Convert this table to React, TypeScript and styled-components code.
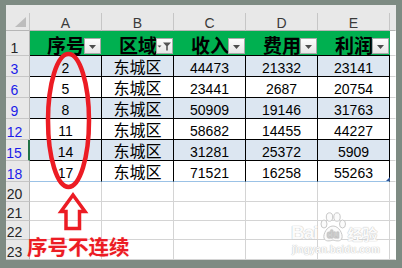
import React from "react";
import styled, { createGlobalStyle } from "styled-components";

const GlobalStyle = createGlobalStyle`
  html, body { margin: 0; padding: 0; background: #7e8b83; }
  body { width: 402px; height: 268px; overflow: hidden; }
`;

const COLS = "24px 72px 72px 72px 72px 72px 6px";
const HEAD_BG = "#e8e8e8";
const HEAD_LINE = "#c6c6c6";
const GRID = "#d4d4d4";
const CJK_STACK = `"Liberation Sans", "Noto Sans CJK SC", sans-serif`;

const Frame = styled.div`
  width: 402px;
  height: 268px;
  box-sizing: border-box;
  padding: 5px 6px 8px 6px;
  background: #7e8b83;
`;

const Sheet = styled.div`
  position: relative;
  width: 390px;
  height: 255px;
  background: #fff;
  overflow: hidden;
  display: flex;
  flex-direction: column;
  font-family: "Liberation Sans", Arial, sans-serif;
`;

const TopStrip = styled.div`
  flex: none;
  height: 8px;
  background: ${HEAD_BG};
`;

const Row = styled.div<{ $h: number }>`
  flex: none;
  display: grid;
  grid-template-columns: ${COLS};
  height: ${(p) => p.$h}px;
`;

const Corner = styled.div`
  box-sizing: border-box;
  background: ${HEAD_BG};
  border-right: 1px solid ${HEAD_LINE};
  border-bottom: 1px solid #b6b6b6;
  display: flex;
  align-items: flex-end;
  justify-content: flex-end;
  padding: 0 3px 3px 0;
`;

const ColHead = styled.div<{ $last?: boolean }>`
  box-sizing: border-box;
  background: ${HEAD_BG};
  border-right: 1px solid ${(p) => (p.$last ? HEAD_BG : HEAD_LINE)};
  border-bottom: 1px solid #b6b6b6;
  display: flex;
  align-items: flex-end;
  justify-content: center;
  font-size: 14px;
  line-height: 14px;
  color: #3a3a3a;
`;

const RowHead = styled.div<{ $filtered?: boolean; $active?: boolean }>`
  box-sizing: border-box;
  background: ${HEAD_BG};
  border-bottom: 1px solid ${HEAD_LINE};
  border-right: ${(p) => (p.$active ? "2px solid #217346" : "1px solid #b6b6b6")};
  display: flex;
  align-items: flex-end;
  justify-content: center;
  padding: 0 6px 0 0;
  font-size: 14px;
  line-height: 14px;
  color: ${(p) => (p.$filtered ? "#1c1ce8" : "#262626")};
`;

const HeadCell = styled.div`
  position: relative;
  box-sizing: border-box;
  background: #00b050;
  border-bottom: 1px solid #000;
  display: flex;
  align-items: flex-end;
  justify-content: center;
  font-family: ${CJK_STACK};
  font-weight: 700;
  font-size: 19px;
  line-height: 17px;
  color: #000;
`;

const FilterBtn = styled.span`
  position: absolute;
  right: 1px;
  bottom: 1px;
  width: 17px;
  height: 16px;
  box-sizing: border-box;
  border: 1px solid #a9a9a9;
  background: linear-gradient(#fdfdfd, #e6e6e6);
  display: flex;
  align-items: center;
  justify-content: center;
  padding-top: 1px;
`;

const DataCell = styled.div<{ $band?: boolean; $end?: boolean; $cjk?: boolean }>`
  box-sizing: border-box;
  background: ${(p) => (p.$band ? "#dce6f1" : "#fff")};
  border-right: 1px solid #000;
  border-bottom: 1px solid ${(p) => (p.$end ? "#9bc2e6" : "#000")};
  display: flex;
  align-items: flex-end;
  justify-content: center;
  padding-bottom: 1px;
  font-family: ${CJK_STACK};
  font-size: ${(p) => (p.$cjk ? 16 : 14)}px;
  line-height: 14px;
  color: #000;
`;

const EmptyCell = styled.div<{ $last?: boolean }>`
  box-sizing: border-box;
  background: #fff;
  border-right: 1px solid ${(p) => (p.$last ? "#fff" : GRID)};
  border-bottom: 1px solid ${GRID};
`;

const Overlay = styled.svg`
  position: absolute;
  left: 0;
  top: 0;
  width: 390px;
  height: 255px;
  pointer-events: none;
`;

const ResizeHandle = styled.span`
  position: absolute;
  left: 380px;
  top: 172px;
  width: 0;
  height: 0;
  border-left: 4px solid transparent;
  border-bottom: 4px solid #2f5597;
`;

const Callout = styled.div`
  position: absolute;
  left: 21px;
  top: 231px;
  font-family: "Noto Sans CJK SC", sans-serif;
  font-weight: 700;
  font-size: 20.5px;
  line-height: 20.5px;
  color: #ec1c24;
  white-space: nowrap;
  text-shadow: 0 0 1px rgba(255, 170, 180, 0.8);
`;

const Watermark = styled.div`
  position: absolute;
  left: 279px;
  top: 207px;
  display: flex;
  flex-direction: column;
  align-items: flex-start;
  pointer-events: none;
  color: #fbfbfb;
  text-shadow: 0 0 1px #c4c4c4, 0 0 1px #c4c4c4;
`;

const WmTop = styled.div`
  display: flex;
  align-items: flex-end;
  gap: 1px;
`;

const WmBai = styled.span`
  font-family: "Liberation Sans", Arial, sans-serif;
  font-weight: 700;
  font-size: 19px;
  line-height: 19px;
  letter-spacing: -1px;
  margin-left: 6px;
  margin-bottom: 1px;
`;

const WmJy = styled.span`
  font-family: ${CJK_STACK};
  font-weight: 700;
  font-size: 15px;
  line-height: 16px;
`;

const WmUrl = styled.span`
  font-family: "Liberation Sans", Arial, sans-serif;
  font-weight: 700;
  font-size: 10px;
  line-height: 11px;
  margin-left: 7px;
  margin-top: 1px;
`;

const Triangle = () => (
  <svg width="7" height="4" viewBox="0 0 7 4">
    <polygon points="0,0 7,0 3.5,4" fill="#4d4d4d" />
  </svg>
);

const FunnelIcon = () => (
  <svg width="15" height="9" viewBox="0 0 15 9">
    <polygon points="0.5,3.5 4.5,3.5 2.5,5.5" fill="#555" />
    <polygon points="6,0.5 14,0.5 10.8,4 10.8,8.5 9.2,8.5 9.2,4" fill="#555" />
  </svg>
);

const SelectAll = () => (
  <svg width="11" height="10" viewBox="0 0 11 10">
    <polygon points="0,10 11,10 11,0" fill="#bdbdbd" />
  </svg>
);

const Paw = () => (
  <svg width="28" height="31" viewBox="0 0 28 31">
    <g fill="#fbfbfb" stroke="#c8c8c8" strokeWidth="1">
      <ellipse cx="5" cy="12" rx="3" ry="4" />
      <ellipse cx="10.5" cy="5" rx="3.2" ry="4.2" />
      <ellipse cx="18" cy="5" rx="3.2" ry="4.2" />
      <ellipse cx="23.5" cy="12" rx="3" ry="4" />
      <path d="M14 14 C 8 14, 4 22, 5 26 C 6 30, 11 29, 14 28 C 17 29, 22 30, 23 26 C 24 22, 20 14, 14 14 Z" />
    </g>
    <text
      x="14"
      y="26"
      textAnchor="middle"
      fontFamily="Liberation Sans, Arial, sans-serif"
      fontWeight="700"
      fontSize="10"
      fill="#fbfbfb"
      stroke="#c4c4c4"
      strokeWidth="0.6"
    >
      du
    </text>
  </svg>
);

const headers = ["序号", "区域", "收入", "费用", "利润"];
const rows = [
  { n: 3, v: ["2", "东城区", "44473", "21332", "23141"] },
  { n: 6, v: ["5", "东城区", "23441", "2687", "20754"] },
  { n: 9, v: ["8", "东城区", "50909", "19146", "31763"] },
  { n: 12, v: ["11", "东城区", "58682", "14455", "44227"] },
  { n: 15, v: ["14", "东城区", "31281", "25372", "5909"] },
  { n: 18, v: ["17", "东城区", "71521", "16258", "55263"] },
];
const emptyRows = [
  { n: 20, h: 20 },
  { n: 21, h: 19 },
  { n: 22, h: 19 },
  { n: 23, h: 20 },
];

export default function App() {
  return (
    <>
      <GlobalStyle />
      <Frame>
        <Sheet>
          <TopStrip />
          <Row $h={18}>
            <Corner>
              <SelectAll />
            </Corner>
            {["A", "B", "C", "D", "E"].map((c) => (
              <ColHead key={c}>{c}</ColHead>
            ))}
            <ColHead $last />
          </Row>
          <Row $h={25}>
            <RowHead>1</RowHead>
            {headers.map((h, i) => (
              <HeadCell key={h}>
                {h}
                <FilterBtn>{i === 1 ? <FunnelIcon /> : <Triangle />}</FilterBtn>
              </HeadCell>
            ))}
            <EmptyCell $last />
          </Row>
          {rows.map((r, ri) => (
            <Row $h={21} key={r.n}>
              <RowHead $filtered $active={r.n === 15}>
                {r.n}
              </RowHead>
              {r.v.map((val, ci) => (
                <DataCell
                  key={ci}
                  $band={ri % 2 === 0}
                  $end={ri === rows.length - 1}
                  $cjk={ci === 1}
                >
                  {val}
                </DataCell>
              ))}
              <EmptyCell $last />
            </Row>
          ))}
          {emptyRows.map((r) => (
            <Row $h={r.h} key={r.n}>
              <RowHead>{r.n}</RowHead>
              {[0, 1, 2, 3, 4].map((c) => (
                <EmptyCell key={c} />
              ))}
              <EmptyCell $last />
            </Row>
          ))}

          <ResizeHandle />

          <Watermark>
            <WmTop>
              <WmBai>Bai</WmBai>
              <Paw />
              <WmJy>经验</WmJy>
            </WmTop>
            <WmUrl>jingyan.baidu.com</WmUrl>
          </Watermark>

          <Overlay viewBox="6 5 390 255">
            <ellipse
              cx="68.5"
              cy="120.5"
              rx="20.5"
              ry="66.5"
              fill="none"
              stroke="#ec1c24"
              strokeWidth="4.5"
            />
            <path
              d="M73 195 L85 211.5 L79.5 211.5 L79.5 228.5 L66 228.5 L66 211.5 L61 211.5 Z"
              fill="none"
              stroke="#ec1c24"
              strokeWidth="3.5"
              strokeLinejoin="miter"
            />
          </Overlay>

          <Callout>序号不连续</Callout>
        </Sheet>
      </Frame>
    </>
  );
}
